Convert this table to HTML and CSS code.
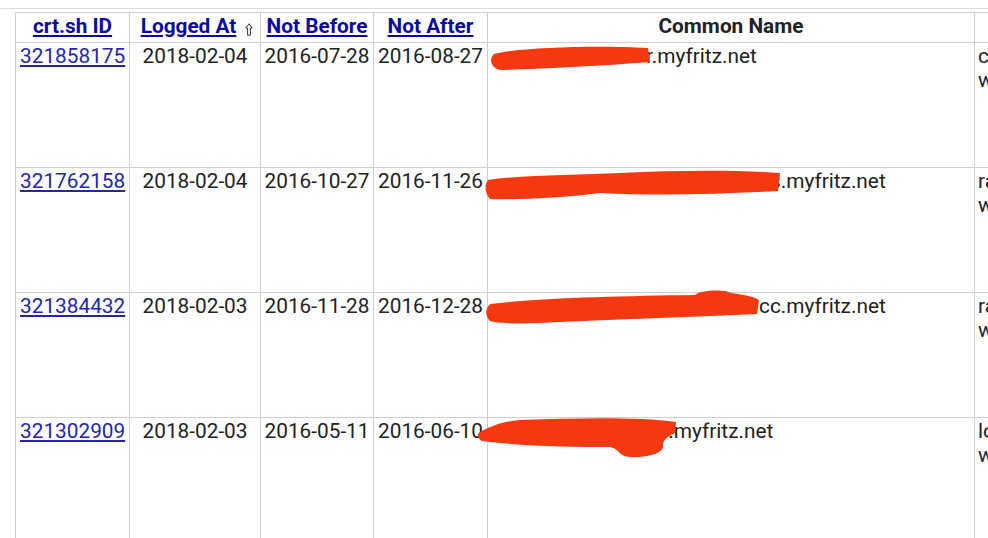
FILE: index.html
```html
<!DOCTYPE html>
<html>
<head>
<meta charset="utf-8">
<link rel="stylesheet" href="styles.css">
</head>
<body>
<div class="page">
  <div class="rule"></div>
  <table class="certs">
    <colgroup>
      <col class="c-id"><col class="c-logged"><col class="c-nb"><col class="c-na"><col class="c-cn"><col class="c-mi">
    </colgroup>
    <thead>
      <tr class="head">
        <th><a href="#">crt.sh ID</a></th>
        <th><a href="#">Logged At</a><svg class="sort" width="8" height="13" viewBox="0 0 8 13"><path d="M4 0.8 L7.2 5 H5.4 V12.2 H2.6 V5 H0.8 Z" fill="none" stroke="#333" stroke-width="1"/></svg></th>
        <th><a href="#">Not Before</a></th>
        <th><a href="#">Not After</a></th>
        <th class="plain">Common Name</th>
        <th class="plain"></th>
      </tr>
    </thead>
    <tbody>
      <tr class="row">
        <td class="id"><a href="#">321858175</a></td>
        <td class="date">2018-02-04</td>
        <td class="date">2016-07-28</td>
        <td class="date">2016-08-27</td>
        <td class="cn"><span class="hide h1"></span>r.myfritz.net</td>
        <td class="mi">c<br>w</td>
      </tr>
      <tr class="row">
        <td class="id"><a href="#">321762158</a></td>
        <td class="date">2018-02-04</td>
        <td class="date">2016-10-27</td>
        <td class="date">2016-11-26</td>
        <td class="cn"><span class="hide h2"></span>s.myfritz.net</td>
        <td class="mi">ra<br>w</td>
      </tr>
      <tr class="row">
        <td class="id"><a href="#">321384432</a></td>
        <td class="date">2018-02-03</td>
        <td class="date">2016-11-28</td>
        <td class="date">2016-12-28</td>
        <td class="cn"><span class="hide h3"></span>cc.myfritz.net</td>
        <td class="mi">ra<br>w</td>
      </tr>
      <tr class="row">
        <td class="id"><a href="#">321302909</a></td>
        <td class="date">2018-02-03</td>
        <td class="date">2016-05-11</td>
        <td class="date">2016-06-10</td>
        <td class="cn"><span class="hide h4"></span>no.myfritz.net</td>
        <td class="mi">lo<br>w</td>
      </tr>
    </tbody>
  </table>
  <svg class="redact" width="988" height="538" viewBox="0 0 988 538">
    <g fill="#f4380f">
      <path d="M494 54 C520 47 600 45 648 48 L650 62 C600 66 540 69 500 70 C490 67 489 59 494 54 Z"/>
      <path d="M488 180 C520 175 580 175 620 173 C680 170 740 170 780 173 L778 191 C720 194 660 196 600 193 C560 198 520 200 490 199 C485 193 484 185 488 180 Z"/>
      <path d="M490 304 C540 298 620 296 695 295 C700 290 725 289 731 293 C745 295 756 297 759 300 L757 314 C700 317 620 319 560 322 C530 324 500 324 490 321 C485 315 485 309 490 304 Z"/>
      <path d="M480 432 C490 427 500 422 520 420 C580 418 640 417 676 422 L675 433 C668 436 663 440 663 445 C665 452 650 458 630 457 C618 456 620 449 610 447 C570 447 520 446 482 441 C477 438 477 434 480 432 Z"/>
    </g>
  </svg>
</div>
</body>
</html>
```
FILE: styles.css
```css
html, body {
  margin: 0;
  padding: 0;
  background: #fff;
  overflow: hidden;
}
body {
  font-family: Roboto, "Liberation Sans", sans-serif;
  color: #222;
  width: 988px;
  height: 538px;
}
.page {
  position: relative;
  width: 988px;
  height: 538px;
  overflow: hidden;
}
.rule {
  margin-top: 8px;
  height: 0;
  border-top: 1px solid #dcdcdc;
}
.certs {
  margin-top: 3px;
  margin-left: 15px;
  border-collapse: collapse;
  table-layout: fixed;
  width: 1259px;
  font-size: 20.8px;
  line-height: 24px;
}
.c-id { width: 114px; }
.c-logged { width: 131px; }
.c-nb { width: 113px; }
.c-na { width: 114px; }
.c-cn { width: 487px; }
.c-mi { width: 300px; }
.certs th, .certs td {
  border: 1px solid #cfcfcf;
  padding: 0 4px;
  white-space: nowrap;
  overflow: hidden;
}
.certs th {
  font-weight: bold;
  text-align: center;
  vertical-align: middle;
  padding-top: 0;
  padding-bottom: 3px;
}
.head { height: 30px; }
.certs th a {
  color: #0b0ba3;
  text-decoration: underline;
  text-underline-offset: 2px;
}
.certs th.plain { color: #222; }
.sort {
  vertical-align: -3px;
  margin-left: 9px;
  margin-right: -4px;
}
.row { height: 125px; }
.certs td {
  vertical-align: top;
  padding-top: 1px;
}
.certs td.id { padding-left: 4px; padding-right: 2px; text-align: left; }
.certs td.id a {
  color: #2525aa;
  text-decoration: underline;
  text-underline-offset: 2px;
}
.certs td.date { text-align: center; padding-left: 3px; padding-right: 3px; }
.certs td.cn { padding-left: 3px; border-left-color: #b8b8b8; }
.certs td.mi { padding-left: 3px; }
.hide {
  display: inline-block;
  height: 10px;
}
.h1 { width: 155px; }
.h2 { width: 279px; }
.h3 { width: 268px; }
.h4 { width: 154px; }
.redact {
  position: absolute;
  top: 0;
  left: 0;
  pointer-events: none;
}
```
